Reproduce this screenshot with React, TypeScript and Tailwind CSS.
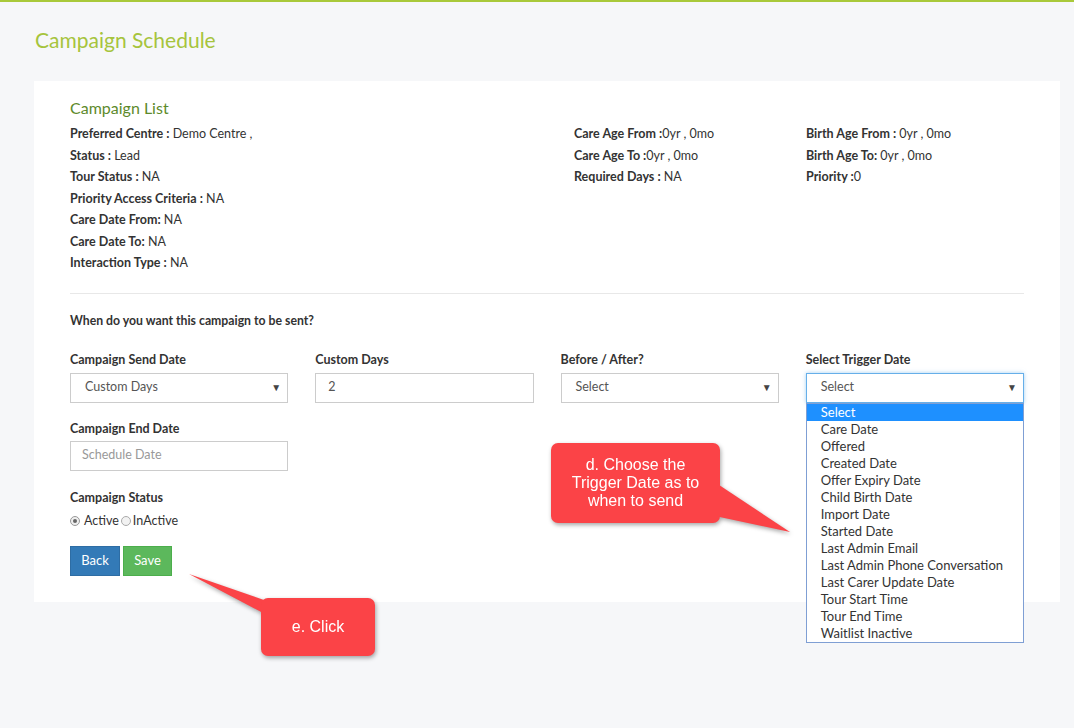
import React from 'react';

const leftInfo = [
  ['Preferred Centre :', ' Demo Centre ,'],
  ['Status :', ' Lead'],
  ['Tour Status :', ' NA'],
  ['Priority Access Criteria :', ' NA'],
  ['Care Date From:', ' NA'],
  ['Care Date To:', ' NA'],
  ['Interaction Type :', ' NA'],
];

const midInfo = [
  ['Care Age From :', '0yr , 0mo'],
  ['Care Age To :', '0yr , 0mo'],
  ['Required Days :', ' NA'],
];

const rightInfo = [
  ['Birth Age From :', ' 0yr , 0mo'],
  ['Birth Age To:', ' 0yr , 0mo'],
  ['Priority :', '0'],
];

const triggerOptions = [
  'Select',
  'Care Date',
  'Offered',
  'Created Date',
  'Offer Expiry Date',
  'Child Birth Date',
  'Import Date',
  'Started Date',
  'Last Admin Email',
  'Last Admin Phone Conversation',
  'Last Carer Update Date',
  'Tour Start Time',
  'Tour End Time',
  'Waitlist Inactive',
];

function InfoRow({ label, value }: { label: string; value: string }) {
  return (
    <div className="h-[21.5px] leading-[21.5px] text-[12.5px] text-[#333]">
      <span className="font-bold">{label}</span>
      <span>{value}</span>
    </div>
  );
}

function FakeSelect({ value, focused }: { value: string; focused?: boolean }) {
  return (
    <div
      className={
        focused
          ? 'h-[30px] border border-[#66afe9] shadow-[0_0_4px_rgba(102,175,233,0.6)] bg-white flex items-center justify-between pl-[14px] pr-[6px] text-[12.5px] text-[#555]'
          : 'h-[30px] border border-[#ccc] bg-white flex items-center justify-between pl-[14px] pr-[6px] text-[12.5px] text-[#555]'
      }
    >
      <span>{value}</span>
      <span className="text-[10px] text-[#444]">▼</span>
    </div>
  );
}

export default function App() {
  return (
    <div className="min-h-[728px] bg-[#f6f7f9] border-t-2 border-[#a9c93a] font-['Lato','Noto_Sans',sans-serif] relative overflow-hidden">
      <h1 className="pl-[35px] pt-[24px] h-[79px] text-[21px] leading-[28px] text-[#a6c43d]">Campaign Schedule</h1>

      <div className="ml-[34px] mr-[14px] bg-white pl-[36px] pr-[36px] pt-[17px] pb-[26px]">
        <h2 className="text-[16px] leading-[20px] text-[#5d8a2b] mb-[5px]">Campaign List</h2>

        <div className="grid grid-cols-[504px_232px_1fr]">
          <div>
            {leftInfo.map(([l, v]) => (
              <InfoRow key={l} label={l} value={v} />
            ))}
          </div>
          <div>
            {midInfo.map(([l, v]) => (
              <InfoRow key={l} label={l} value={v} />
            ))}
          </div>
          <div>
            {rightInfo.map(([l, v]) => (
              <InfoRow key={l} label={l} value={v} />
            ))}
          </div>
        </div>

        <div className="mt-[19px] border-t border-[#e8e8e8]" />

        <p className="mt-[19px] text-[12.25px] leading-[16px] font-bold text-[#333]">When do you want this campaign to be sent?</p>

        <div className="mt-[22px] grid grid-cols-4 gap-x-[27px]">
          <div>
            <div className="text-[12.5px] leading-[18px] font-bold text-[#333] mb-[4px]">Campaign Send Date</div>
            <FakeSelect value="Custom Days" />
          </div>
          <div>
            <div className="text-[12.5px] leading-[18px] font-bold text-[#333] mb-[4px]">Custom Days</div>
            <div className="h-[30px] border border-[#ccc] flex items-center pl-[12px] text-[12.5px] text-[#555]">2</div>
          </div>
          <div>
            <div className="text-[12.5px] leading-[18px] font-bold text-[#333] mb-[4px]">Before / After?</div>
            <FakeSelect value="Select" />
          </div>
          <div className="relative">
            <div className="text-[12.5px] leading-[18px] font-bold text-[#333] mb-[4px]">Select Trigger Date</div>
            <FakeSelect value="Select" focused />
            <ul className="absolute left-0 right-0 top-[52px] z-10 bg-white border border-[#7f9fd4] text-[13px] text-[#333]">
              {triggerOptions.map((o, i) => (
                <li
                  key={o}
                  className={
                    i === 0
                      ? 'h-[17px] leading-[17px] pl-[14px] bg-[#1e90ff] text-white'
                      : 'h-[17px] leading-[17px] pl-[14px]'
                  }
                >
                  {o}
                </li>
              ))}
            </ul>
          </div>
        </div>

        <div className="mt-[17px] w-[218px]">
          <div className="text-[12.5px] leading-[18px] font-bold text-[#333] mb-[3px]">Campaign End Date</div>
          <div className="h-[30px] border border-[#ccc] flex items-center pl-[11px] text-[12.5px] text-[#999]">Schedule Date</div>
        </div>

        <div className="mt-[18px]">
          <div className="text-[12.5px] leading-[18px] font-bold text-[#333]">Campaign Status</div>
          <div className="mt-[5px] flex items-center text-[12.5px] leading-[18px] text-[#333]">
            <span className="w-[10px] h-[10px] rounded-full border border-[#999] bg-[#eee] flex items-center justify-center mr-[4px]">
              <span className="w-[4px] h-[4px] rounded-full bg-[#666]" />
            </span>
            <span>Active</span>
            <span className="w-[10px] h-[10px] rounded-full border border-[#aaa] bg-[#f2f2f2] ml-[2px] mr-[2px]" />
            <span>InActive</span>
          </div>
        </div>

        <div className="mt-[16px] flex gap-[3px]">
          <button className="h-[30px] w-[50px] bg-[#337ab7] border border-[#2e6da4] text-white text-[13px]">Back</button>
          <button className="h-[30px] w-[49px] bg-[#5cb85c] border border-[#4cae4c] text-white text-[13px]">Save</button>
        </div>
      </div>

      {/* callout d */}
      <div className="absolute left-[551px] top-[441px] z-20 drop-shadow-[1px_2px_2px_rgba(0,0,0,0.35)]">
        <svg className="absolute left-[150px] top-[30px]" width="100" height="62" viewBox="0 0 100 62">
          <polygon points="0,0 0,40 89,59" fill="#fb4347" />
        </svg>
        <div className="relative w-[169px] h-[80px] rounded-[7px] bg-[#fb4347] text-white text-center font-['Liberation_Sans',Arial,sans-serif] text-[16px] leading-[18px] pt-[13px]">
          d. Choose the<br />Trigger Date as to<br />when to send
        </div>
      </div>

      {/* callout e */}
      <div className="absolute left-[261px] top-[596px] z-20 drop-shadow-[1px_2px_2px_rgba(0,0,0,0.35)]">
        <svg className="absolute left-[-72px] top-[-24px]" width="100" height="50" viewBox="0 0 100 50">
          <polygon points="0,0 75,26 95,40 95,50" fill="#fb4347" />
        </svg>
        <div className="relative w-[114px] h-[58px] rounded-[7px] bg-[#fb4347] text-white text-center font-['Liberation_Sans',Arial,sans-serif] text-[16px] leading-[58px]">
          e. Click
        </div>
      </div>
    </div>
  );
}
